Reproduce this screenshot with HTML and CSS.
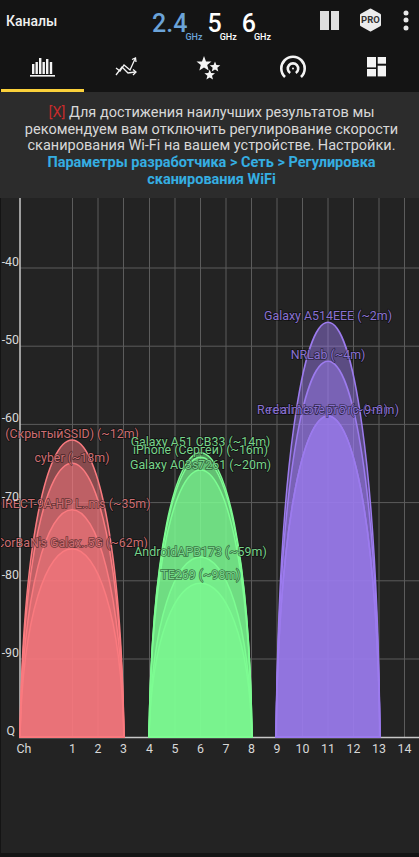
FILE: index.html
```html
<!DOCTYPE html>
<html lang="ru">
<head>
    <meta charset="UTF-8">
    <title>Каналы</title>
    <link rel="stylesheet" href="styles.css">
</head>
<body>
    <div class="app">
        <header class="topbar">
            <div class="title">Каналы</div>
            <div class="bands">
                <div class="band band-active"><span class="band-num">2.4</span><span class="band-unit">GHz</span></div>
                <div class="band"><span class="band-num">5</span><span class="band-unit">GHz</span></div>
                <div class="band"><span class="band-num">6</span><span class="band-unit">GHz</span></div>
            </div>
            <div class="actions">
                <svg class="pause" width="19" height="19" viewBox="0 0 19 19"><rect x="0" width="9" height="19"/><rect x="11" width="8" height="19"/></svg>
                <div class="pro">
                    <svg width="23" height="24" viewBox="0 0 23 24"><path class="pro-hex" d="M11.5 2 20.5 7V17L11.5 22 2.5 17V7Z"/></svg>
                    <span class="pro-text">PRO</span>
                </div>
                <svg class="dots" width="6" height="21" viewBox="0 0 6 21"><circle cx="3" cy="3" r="2.5"/><circle cx="3" cy="10" r="2.5"/><circle cx="3" cy="18" r="2.5"/></svg>
            </div>
        </header>

        <nav class="tabs">
            <div class="tab tab-active">
                <svg width="26" height="22" viewBox="0 0 26 22">
                    <g class="icon-fill">
                        <rect x="2" y="8" width="2.4" height="10"/>
                        <rect x="5.5" y="6" width="2.4" height="12"/>
                        <rect x="9" y="2" width="2.4" height="16"/>
                        <rect x="12.5" y="6" width="2.4" height="12"/>
                        <rect x="16" y="3" width="2.4" height="15"/>
                        <rect x="19.8" y="6" width="2.4" height="12"/>
                        <rect x="0" y="19" width="25" height="1.6"/>
                    </g>
                </svg>
            </div>
            <div class="tab">
                <svg width="24" height="22" viewBox="0 0 24 22">
                    <g class="icon-line">
                        <path d="M2 12 6 15 10 9 16 14 21 3"/>
                        <path d="M18 3.500 21.500 2 22 6"/>
                        <path d="M2 19 8 11 14 17 21 16"/>
                        <path d="M19 13.500 22 16 19 19"/>
                    </g>
                </svg>
            </div>
            <div class="tab">
                <svg width="26" height="26" viewBox="0 -2 26 26">
                    <g class="icon-fill">
                        <path d="M8 0 10 5.400 15.500 5.600 11.200 9.100 12.700 14.500 8 11.400 3.300 14.500 4.800 9.100 0.500 5.600 6 5.400Z"/>
                        <path d="M19 5.500 20.400 9.100 24.300 9.300 21.300 11.700 22.300 15.500 19 13.400 15.700 15.500 16.700 11.700 13.700 9.300 17.600 9.100Z"/>
                        <path d="M13.700 13.500 15.100 17.100 19 17.300 16 19.700 17 23.500 13.700 21.400 10.400 23.500 11.400 19.700 8.400 17.300 12.300 17.100Z"/>
                    </g>
                </svg>
            </div>
            <div class="tab">
                <svg width="26" height="24" viewBox="0 -1.500 26 24">
                    <g class="icon-line icon-arcs">
                        <path d="M5 20.500A11.700 11.700 0 1 1 21 20.500"/>
                        <path d="M10.200 16.500A5.200 5.200 0 1 1 15.800 16.500"/>
                    </g>
                    <circle class="icon-fill" cx="13" cy="12" r="1"/>
                </svg>
            </div>
            <div class="tab">
                <svg width="19" height="20" viewBox="0 0 19 20">
                    <g class="icon-fill">
                        <rect x="0" y="0" width="9" height="10.400"/>
                        <rect x="10.700" y="0" width="8.300" height="6.700"/>
                        <rect x="0" y="12" width="9" height="7.400"/>
                        <rect x="10.700" y="8.700" width="8.300" height="10.700"/>
                    </g>
                </svg>
            </div>
        </nav>

        <section class="notice">
            <p><span class="notice-close">[X]</span> Для достижения наилучших результатов мы рекомендуем вам отключить регулирование скорости сканирования Wi-Fi на вашем устройстве. Настройки.</p>
            <p class="notice-link">Параметры разработчика &gt; Сеть &gt; Регулировка сканирования WiFi</p>
        </section>

        <main class="chart">
            <svg class="chart-svg" width="418" height="655" viewBox="1 198 418 655">
                <!-- сетка -->
                <g class="grid">
                    <path d="M72.500 198V737M98 198V737M123.500 198V737M149.500 198V737M175 198V737M200.500 198V737M226 198V737M251.500 198V737M277 198V737M302.500 198V737M328 198V737M353.500 198V737M379 198V737M404.500 198V737"/>
                    <path d="M20 268H419M20 346.200H419M20 424.400H419M20 502.600H419M20 580.800H419M20 659H419"/>
                </g>
                <path class="axis" d="M20 198V737.500H419"/>

                <!-- кривые: пик = 737 - 3/4 высоты контрольных точек -->
                <g class="curves red">
                    <path d="M20 737C26 341 118 341 124 737Z"/>
                    <path d="M20 737C26 372 118 372 124 737Z"/>
                    <path d="M20 737C26 434 118 434 124 737Z"/>
                    <path d="M20 737C26 486 118 486 124 737Z"/>
                </g>
                <g class="curves green">
                    <path d="M149 737C154.500 358 246.500 358 252 737Z"/>
                    <path d="M149 737C154.500 364 246.500 364 252 737Z"/>
                    <path d="M149 737C154.500 381 246.500 381 252 737Z"/>
                    <path d="M149 737C154.500 497 246.500 497 252 737Z"/>
                    <path d="M149 737C154.500 532 246.500 532 252 737Z"/>
                </g>
                <g class="curves purple">
                    <path d="M276 737C282 184 374 184 380 737Z"/>
                    <path d="M276 737C282 236 374 236 380 737Z"/>
                    <path d="M276 737C282 309 374 309 380 737Z"/>
                    <path d="M276 737C282 309 374 309 380 737Z"/>
                </g>

                <g class="labels label-red">
                    <text x="72" y="438">(СкрытыйSSID) (~12m)</text>
                    <text x="72" y="462">cyber (~18m)</text>
                    <text x="72" y="508">DIRECT-9A-HP L..ms (~35m)</text>
                    <text x="72" y="547">CorBaN's Galax..5G (~62m)</text>
                </g>
                <g class="labels label-green">
                    <text x="200.500" y="446">Galaxy A51 CB33 (~14m)</text>
                    <text x="200.500" y="454">iPhone (Сергей) (~16m)</text>
                    <text x="200.500" y="469">Galaxy A03s7261 (~20m)</text>
                    <text x="200.500" y="556">AndroidAPB173 (~59m)</text>
                    <text x="200.500" y="579">TE269 (~98m)</text>
                </g>
                <g class="labels label-purple">
                    <text x="328" y="320">Galaxy A514EEE (~2m)</text>
                    <text x="328" y="359">NRLab (~4m)</text>
                    <text x="328" y="414" textLength="142">Redmi Note 7 Pro (~9m)</text>
                    <text x="328" y="414" textLength="120">realme 7 pro (~9m)</text>
                </g>

                <g class="ticks ticks-y">
                    <text x="19" y="266">-40</text>
                    <text x="19" y="344">-50</text>
                    <text x="19" y="422">-60</text>
                    <text x="19" y="500.500">-70</text>
                    <text x="19" y="578.500">-80</text>
                    <text x="19" y="657">-90</text>
                    <text x="15" y="735">Q</text>
                </g>
                <g class="ticks ticks-x">
                    <text x="24" y="753">Ch</text>
                    <text x="72.500" y="753">1</text>
                    <text x="98" y="753">2</text>
                    <text x="123.500" y="753">3</text>
                    <text x="149.500" y="753">4</text>
                    <text x="175" y="753">5</text>
                    <text x="200.500" y="753">6</text>
                    <text x="226" y="753">7</text>
                    <text x="251.500" y="753">8</text>
                    <text x="277" y="753">9</text>
                    <text x="302.500" y="753">10</text>
                    <text x="328" y="753">11</text>
                    <text x="353.500" y="753">12</text>
                    <text x="379" y="753">13</text>
                    <text x="404.500" y="753">14</text>
                </g>
            </svg>
        </main>
    </div>
</body>
</html>
```
FILE: styles.css
```css
*{
    margin: 0;
    padding: 0;
    box-sizing: border-box;
}

html,body{
    height: 100%;
}

body{
    background-color: #141414;
    font-family: Roboto, "Noto Sans", sans-serif;
    color: #fff;
    overflow: hidden;
}

.app{
    height: 857px;
    display: flex;
    flex-direction: column;
}

/*顶部栏*/
.topbar{
    height: 44px;
    position: relative;
    display: flex;
    align-items: flex-start;
    padding-left: 6px;
}

.title{
    width: 146px;
    padding-top: 13px;
    font-size: 14px;
    line-height: 17px;
    font-weight: 500;
    color: #f0f0f0;
}

.bands{
    display: flex;
    padding-top: 9px;
}

.band{
    display: flex;
    align-items: flex-start;
    margin-right: 5px;
    color: #fff;
}

.band-active{
    color: #6ba3d8;
}

.band-num{
    font-size: 25px;
    line-height: 29px;
    font-weight: 500;
}

.band-unit{
    font-size: 9px;
    line-height: 10px;
    font-weight: 500;
    margin: 22.500px 0 0 -2px;
}

.actions{
    margin-left: auto;
    display: flex;
    align-items: center;
    height: 40px;
    padding-right: 10px;
}

.pause{
    fill: #dedede;
    margin-right: 20px;
}

.pro{
    width: 23px;
    height: 24px;
    position: relative;
    margin-right: 21px;
}

.pro-hex{
    fill: #ececec;
    stroke: #ececec;
    stroke-width: 3;
    stroke-linejoin: round;
}

.pro-text{
    position: absolute;
    left: 0;
    right: 0;
    top: 7px;
    text-align: center;
    font-size: 9.500px;
    line-height: 10px;
    font-weight: 700;
    color: #333;
}

.dots{
    fill: #e8e8e8;
}

/*标签栏*/
.tabs{
    height: 48px;
    display: grid;
    grid-template-columns: repeat(5, 1fr);
    padding: 0 1px;
}

.tab{
    display: flex;
    align-items: center;
    justify-content: center;
    border-bottom: 3px solid transparent;
}

.tab-active{
    border-bottom-color: #fbd13b;
}

.icon-fill{
    fill: #f4f4f4;
}

.icon-line{
    fill: none;
    stroke: #f4f4f4;
    stroke-width: 1.3;
}

.icon-arcs{
    stroke-width: 2.600;
}

/*提示*/
.notice{
    height: 106px;
    padding-top: 13px;
    background-color: #2c2c2c;
    text-align: center;
    font-size: 14.500px;
    line-height: 16.700px;
    color: #d8d8d8;
}

.notice p{
    padding: 0 18px 0 22px;
}

.notice-close{
    color: #c62b2b;
}

.notice-link{
    font-weight: 700;
    color: #35aee2;
}

/*图表*/
.chart{
    flex: 1;
    padding-left: 1px;
    background-color: #141414;
}

.chart-svg{
    display: block;
    background-color: #232323;
}

.grid path{
    fill: none;
    stroke: #5c5c5c;
    stroke-width: 1;
}

.axis{
    fill: none;
    stroke: #c8c8c8;
    stroke-width: 1.500;
}

.curves path{
    fill-opacity: 0.470;
    stroke-width: 1.500;
}

.red path{
    fill: #fa7a7f;
    stroke: #fa7a7f;
}

.green path{
    fill: #7dfc92;
    stroke: #7dfc92;
}

.purple path{
    fill: #9c7bee;
    stroke: #9c7bee;
}

.labels text{
    font-size: 12.400px;
    text-anchor: middle;
    paint-order: stroke;
    stroke: rgba(0, 0, 0, 0.500);
    stroke-width: 1.500px;
}

.label-red{
    fill: #cc6e72;
}

.label-green{
    fill: #78d48b;
}

.label-purple{
    fill: #8a72d2;
}

.ticks text{
    font-size: 12.400px;
    fill: #d8d8d8;
}

.ticks-y text{
    text-anchor: end;
}

.ticks-x text{
    text-anchor: middle;
}
```
